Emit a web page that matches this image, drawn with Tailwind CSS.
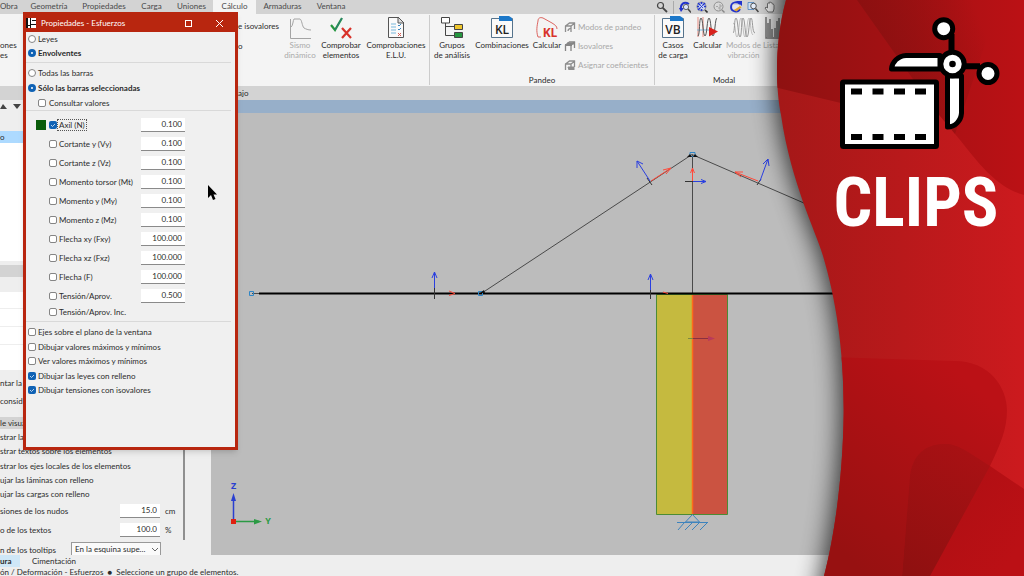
<!DOCTYPE html>
<html lang="es">
<head>
  <meta charset="utf-8">
  <meta name="viewport" content="width=device-width, initial-scale=1">
  <title>Propiedades - Esfuerzos</title>
  <script src="https://cdn.jsdelivr.net/npm/@tailwindcss/browser@4"></script>
</head>
<body class="relative flex flex-col h-screen overflow-hidden bg-[#eeeeee] font-[Lato,'Open_Sans',sans-serif] text-[8px] leading-[10px] text-[#2b2b2b]">

  <!-- tabs -->
  <nav class="flex items-center h-[14px] shrink-0 bg-[#d3d3d3] text-[#4a4a4a] whitespace-nowrap">
    <button class="w-[23px] h-[14px] pb-[2px] text-left">Obra</button>
    <button class="w-[52px] h-[14px] pb-[2px]">Geometría</button>
    <button class="w-[58px] h-[14px] pb-[2px]">Propiedades</button>
    <button class="w-[37px] h-[14px] pb-[2px]">Carga</button>
    <button class="w-[43px] h-[14px] pb-[2px]">Uniones</button>
    <button class="w-[43px] h-[14px] pb-[2px] bg-[#f4f4f4]">Cálculo</button>
    <button class="w-[53px] h-[14px] pb-[2px]">Armaduras</button>
    <button class="w-[44px] h-[14px] pb-[2px]">Ventana</button>
    <div class="flex items-center ml-auto mr-[248px] gap-[5px]">
      <button aria-label="Buscar"><svg class="size-3" viewBox="0 0 12 12" fill="none" stroke="#444"><circle cx="4.5" cy="4.5" r="3" stroke-width="1.2"/><path d="M6.8 6.8L11 11" stroke-width="1.8"/></svg></button>
      <span class="w-px h-[13px] bg-[#aaaaaa]"></span>
      <button aria-label="Zoom previo"><svg class="size-3" viewBox="0 0 12 12" fill="none"><path d="M2 9C1 3 5 0 10 3" stroke="#2233cc" stroke-width="2"/><path d="M0 7l5 0-3 4z" fill="#2233cc"/><circle cx="7" cy="6" r="2.6" fill="#dde6ff" stroke="#444" stroke-width=".8"/><path d="M9 8l3 3.500" stroke="#444" stroke-width="1.500"/></svg></button>
      <button aria-label="Zoom total"><svg class="size-3" viewBox="0 0 12 12" fill="none"><circle cx="5.500" cy="5.500" r="4.500" fill="#c9d4ee" stroke="#777" stroke-width=".8"/><path d="M2 2l2 2M9 2L7 4M2 9l2-2M5.500 1v2M5.500 8v2M1 5.500h2M8 5.500h2" stroke="#2233cc" stroke-width="1.600"/><path d="M4 4l3 3M7 4L4 7" stroke="#2233cc" stroke-width=".8"/><path d="M9 9l2.500 2.500" stroke="#333" stroke-width="1.600"/></svg></button>
      <button aria-label="Zoom doble"><svg class="size-3" viewBox="0 0 12 12" fill="none"><circle cx="5.500" cy="5.500" r="4.500" fill="#d8d8d8" stroke="#888" stroke-width=".9"/><path d="M3 5.500h2M6 4h2v2H6v2h2.500" stroke="#999" stroke-width=".8"/><path d="M9 9l2.500 2.500" stroke="#888" stroke-width="1.400"/></svg></button>
      <button aria-label="Redibujar"><svg class="size-3" viewBox="0 0 12 12" fill="none"><path d="M3 4h6v4H3z" fill="#e4e4f2"/><path d="M10 3C7 0 1 1 1 6c0 5 7 6 9 2" stroke="#2233cc" stroke-width="1.800"/><path d="M6 0h6v5z" fill="#2233cc"/><path d="M4 9l6-4 1.500 1.500-5 4z" fill="#e5a52c"/></svg></button>
      <button aria-label="Zoom ventana"><svg class="size-3" viewBox="0 0 12 12" fill="none"><path d="M1 1.500h6v7H1z" fill="#cfe0f2" stroke="#4a80bb" stroke-width=".8"/><circle cx="6.500" cy="5" r="2.800" fill="#e6eefa" stroke="#444" stroke-width=".9"/><path d="M8.500 7.500l3 3.500" stroke="#444" stroke-width="1.500"/></svg></button>
      <button aria-label="Mover"><svg class="size-3" viewBox="0 0 12 12" fill="#f5f5f5" stroke="#555" stroke-width=".8"><path d="M4 11L1 7l1-1 1.500 1V2.500l1-.5.700.600V1.300l1-.3.700.5.2.5 1-.2.600.7v.7l.9.2.4.8V8L9 11z"/></svg></button>
    </div>
  </nav>

  <!-- ribbon -->
  <section class="flex shrink-0 h-[72px] bg-[#f4f4f4] text-center leading-[10px] whitespace-nowrap overflow-hidden">
    <div class="w-[238px] shrink-0 pt-[26px] text-left">ones<br>es</div>
    <div class="w-[45px] shrink-0 pt-[7px] text-left"><p>e isovalores</p><p class="mt-[10px]">o</p></div>
    <div class="flex w-[147px] shrink-0 border-r border-[#cccccc] my-px">
      <button class="flex flex-col items-center w-[34px] text-[#aaaaaa]">
        <svg class="w-6 h-[25px]" viewBox="0 0 24 25" fill="none" stroke="#a4a4a4"><path d="M2.500 4v19.500H23"/><path d="M3 12c2-1 2-7 3-8h6c2 1 2 7 4 9 2 1 4 2 7 2"/></svg>
        Sismo<br>dinámico
      </button>
      <button class="flex flex-col items-center w-[48px]">
        <svg class="w-6 h-[25px]" viewBox="0 0 24 25" fill="none"><path d="M2 10l4 5L13 3" stroke="#25963f" stroke-width="2.200"/><path d="M6 15L13 3" stroke="#2d7090" stroke-width=".8"/><path d="M13 13l9 10M22 13l-9 10" stroke="#d8322a" stroke-width="2.200"/></svg>
        Comprobar<br>elementos
      </button>
      <button class="flex flex-col items-center w-[62px]">
        <svg class="w-6 h-[25px]" viewBox="0 0 24 25" fill="none"><path d="M4.500 2.500h10l5 5v15h-15z" fill="#fafafa" stroke="#555"/><path d="M14 2v6h6z" fill="#ddd" stroke="#555"/><path d="M7 9h5M7 12h5M7 15h5M7 18h5" stroke="#79b8dc"/><path d="M14 10l1 1 2-2M14 14l1 1 2-2" stroke="#3b88c0"/><path d="M14 18l3 3M17 18l-3 3" stroke="#d85a50"/></svg>
        Comprobaciones<br>E.L.U.
      </button>
    </div>
    <div class="flex flex-col w-[225px] shrink-0 border-r border-[#cccccc] my-px">
      <div class="flex h-[62px]">
        <button class="flex flex-col items-center w-[44px]">
          <svg class="w-6 h-[25px]" viewBox="0 0 24 25" fill="none" stroke="#444"><path d="M5.500 7v13.500H14M5.500 11.500H14"/><path d="M1.500 2.500h8V8h-8z" fill="#fff"/><path d="M14.500 9.500h8v5h-8z" fill="#eec52c"/><path d="M14.500 17.500h8v5h-8z" fill="#25963f"/></svg>
          Grupos<br>de análisis
        </button>
        <button class="flex flex-col items-center w-[56px]">
          <svg class="w-6 h-[25px]" viewBox="0 0 24 25"><path d="M1.500 3.500h21v19h-21z" fill="#fafafa" stroke="#55738c"/><path d="M9 1h10l3 2v3H9z" fill="#1c78c9"/><text x="12" y="19" text-anchor="middle" font-size="12" font-weight="600" fill="#222" font-family="Open Sans">KL</text></svg>
          Combinaciones
        </button>
        <button class="flex flex-col items-center w-[34px]">
          <svg class="w-6 h-[25px]" viewBox="0 0 24 25"><path d="M6 22H3c-2-6-1-11 0-16 0-3 2-4 5-3l9 5c3 2 5 3 5 6" fill="none" stroke="#dc6560"/><text x="15" y="22" text-anchor="middle" font-size="12" font-weight="700" fill="#d8322a" font-family="Open Sans">KL</text></svg>
          Calcular
        </button>
        <div class="flex flex-col pt-[7px] gap-[9px] text-[#a8a8a8]">
          <button class="flex items-center gap-[2px]"><svg class="w-3 h-[10px]" viewBox="0 0 12 10" fill="none" stroke="#8d8d8d"><path d="M1.500 10V4l4-3h5v6M1 4h6v6M7 4l4-3M4 9c0-4 4-1 3-5" stroke-width="1.300"/></svg>Modos de pandeo</button>
          <button class="flex items-center gap-[2px]"><svg class="w-3 h-[10px]" viewBox="0 0 12 10" fill="none" stroke="#858585"><path d="M1.500 10V4l4-3h5v6M7 10V4l4-3" stroke-width="1.300"/><path d="M1 4h7M3 2.500h7" stroke-width="2"/></svg>Isovalores</button>
          <button class="flex items-center gap-[2px]"><svg class="w-3 h-[10px]" viewBox="0 0 12 10" fill="none" stroke="#8d8d8d"><path d="M1.500 10V4l4-3h5v6M1 4h6v6M7 4l4-3" stroke-width="1.300"/><path d="M4 7h6v3H5z" fill="#8d8d8d"/></svg>Asignar coeficientes</button>
        </div>
      </div>
      <p class="leading-[10px]">Pandeo</p>
    </div>
    <div class="flex flex-col w-[138px] shrink-0 my-px">
      <div class="flex h-[62px]">
        <button class="flex flex-col items-center w-[36px]">
          <svg class="w-6 h-[25px]" viewBox="0 0 24 25"><path d="M1.500 3.500h21v19h-21z" fill="#fafafa" stroke="#55738c"/><path d="M9 1h10l3 2v3H9z" fill="#1c78c9"/><text x="12" y="19" text-anchor="middle" font-size="12" font-weight="600" fill="#222" font-family="Open Sans">VB</text></svg>
          Casos<br>de carga
        </button>
        <button class="flex flex-col items-center w-[33px]">
          <svg class="w-6 h-[25px]" viewBox="0 0 24 25" fill="none"><path d="M2 2v20M7 2v20" stroke="#e58b80"/><path d="M1 15h12" stroke="#79b8dc"/><path d="M2 21C4 20 3 3 5 3s2 18 4 18 2-18 4-18 2 18 4 18 2-18 4-18" stroke="#555"/><path d="M13 12l9 4.500-9 5z" fill="#d8221d"/></svg>
          Calcular
        </button>
        <button class="flex flex-col items-center w-[39px] text-[#aaaaaa]">
          <svg class="w-6 h-[25px]" viewBox="0 0 24 25" fill="none" stroke="#9a9a9a"><path d="M1 18C3 18 2 3 4 3s2 19 4 19S9 3 11 3s2 19 4 19 2-19 4-19 1 15 4 15"/><path d="M1 8c3 0 2 14 4 14S7 3 9 3s2 19 4 19 2-19 4-19 1 15 4 17" stroke-width=".6"/></svg>
          Modos de<br>vibración
        </button>
        <button class="flex flex-col items-start text-[#aaaaaa]">
          <svg class="w-6 h-[25px]" viewBox="0 0 24 25" fill="none" stroke="#777"><path d="M3 2v21h21" stroke-width="1.500"/><path d="M5 22V8M7 22V4M9 22v-8M12 22v-9M14 22V6M16 22V3M19 22V9" stroke-width="1.500"/></svg>
          Listados
        </button>
      </div>
      <p class="leading-[10px]">Modal</p>
    </div>
  </section>

  <div class="flex items-center shrink-0 h-[14px] bg-[#d3d3d3] pl-[238px]">ajo</div>

  <main class="flex flex-1 min-h-0">
    <!-- side panel -->
    <aside class="flex flex-col w-[211px] shrink-0 overflow-hidden whitespace-nowrap">
      <div class="flex h-[31px] shrink-0 gap-[5px] pt-1">
        <svg class="w-2 h-[6px]" viewBox="0 0 8 6"><path d="M0 5h7L3 0z" fill="#444"/></svg>
        <svg class="w-2 h-[6px]" viewBox="0 0 8 6"><path d="M0 0h8L4 5z" fill="#444"/></svg>
      </div>
      <div class="h-[12px] shrink-0 bg-[#addaff] leading-[12px]">o</div>
      <div class="h-[118px] shrink-0 bg-white"></div>
      <div class="h-[4px] shrink-0"></div>
      <div class="h-[12px] shrink-0 bg-[#d3d3d3]"></div>
      <div class="h-[15px] shrink-0"></div>
      <div class="shrink-0 bg-white divide-y divide-[#eeeeee]">
        <div class="h-[17px]"></div><div class="h-[18px]"></div><div class="h-[18px]"></div><div class="h-[25px]"></div>
      </div>
      <p class="mt-[8px] shrink-0">ntar la</p>
      <p class="mt-[8px] shrink-0">consid</p>
      <p class="mt-[11px] h-[12px] shrink-0 bg-[#d3d3d3] leading-[12px]">le visua</p>
      <div class="relative flex-1 min-h-0 leading-[14px] pt-px">
        <p>strar la</p>
        <p>strar textos sobre los elementos</p>
        <p class="mt-px">strar los ejes locales de los elementos</p>
        <p>ujar las láminas con relleno</p>
        <p>ujar las cargas con relleno</p>
        <div class="flex items-center h-[19px]">
          <label for="nudos" class="w-[120px]">siones de los nudos</label>
          <input id="nudos" value="15.0" class="w-10 h-[14px] px-[3px] bg-white border-b border-[#8a8a8a] text-right"><span class="ml-[5px]">cm</span>
        </div>
        <div class="flex items-center h-[19px]">
          <label for="textos" class="w-[120px]">o de los textos</label>
          <input id="textos" value="100.0" class="w-10 h-[14px] px-[3px] bg-white border-b border-[#8a8a8a] text-right"><span class="ml-[5px]">%</span>
        </div>
        <div class="flex items-center h-[19px] mt-px">
          <label for="tooltips" class="w-[71px]">n de los tooltips</label>
          <div class="relative">
            <select id="tooltips" class="appearance-none w-[90px] h-4 px-[3px] bg-[#fafafa] border border-[#999999] leading-[13px]"><option>En la esquina supe...</option></select>
            <svg class="absolute right-[3px] top-[6px] w-[6px] h-1" viewBox="0 0 6 4" fill="none" stroke="#666"><path d="M0 0l3 3 3-3"/></svg>
          </div>
        </div>
        <div class="absolute left-[183px] top-0 w-[2px] h-[111px] bg-[#8f8f8f]"></div>
      </div>
    </aside>

    <!-- drawing -->
    <div class="flex flex-col flex-1 min-w-0">
      <div class="h-[13px] shrink-0 bg-[#97afc9]"></div>
      <svg class="flex-1 min-h-0 w-full bg-[#bcbcbc]" viewBox="211 113 813 442" preserveAspectRatio="xMinYMin slice" fill="none">
        <g stroke="#4a4a4a"><path d="M482 293L692 154.500 850 223M692.500 155v138M252 293.500h9"/></g>
        <path d="M656.500 294.500h36v220h-36z" fill="#c5ba3f"/>
        <path d="M692.500 294.500h35v220h-35z" fill="#cb5341"/>
        <path d="M656.500 294.500h71v220h-71z" stroke="#4c8b35"/>
        <path d="M692.500 295v219" stroke="#ff6a1a" stroke-width="1.500"/>
        <path d="M259 293.500h600" stroke="#000" stroke-width="2"/>
        <path d="M434.500 284v15M650.500 284v15M685 181.500h8M647 178l5 7M757 185l4-6" stroke="#333"/>
        <g stroke="#2a3fe0">
          <path d="M434.500 288v-16m-2.500 6l2.500-6 2.500 6M650.500 290v-16m-2.500 6l2.500-6 2.500 6"/>
          <path d="M650 181l-13-20m0 7l0-7 6 3M760 181l8-22m-5 5l5-5 1 7M693 181.500h13m-5-2l5 2-5 2"/>
        </g>
        <g stroke="#ff4a3a">
          <path d="M651 181l20-13m-8 2l8-2-5 6M758 181l-23-9m8 0l-8 0 6 5M692.500 181v-13m-2 5l2-5 2 5M449 291l6 2.500-6 2M663 292l5 1.500"/>
        </g>
        <path d="M688 338.500h5" stroke="#7d8840"/><path d="M693 338.500h18" stroke="#8a3040"/><path d="M708 336l7 2.500-7 2.500z" fill="#b93a5b"/>
        <path d="M249.500 291.500h4v4h-4zM478.500 291.500h4v4h-4zM690 152.500h5v4h-5z" stroke="#2f86c7"/>
        <path d="M480 293l4-3 1 3zM687 157l3-3 2 3zM693 157l2-3 3 3z" fill="#111"/>
        <path d="M692.500 514.500l-7 7.500h14zM677 522.500h31M684 523l-6 7M692 523l-7 7M699 523l-7 7M707 523l-7 7" stroke="#3d83bd"/>
        <!-- axes -->
        <path d="M233.500 520v-22" stroke="#2a3fd0" stroke-width="1.500"/><path d="M231 501l2.500-8 2.500 8z" fill="#2a3fd0"/>
        <path d="M235 521.500h24" stroke="#2b9a44" stroke-width="1.500"/><path d="M254 519l8 2.500-8 3z" fill="#2b9a44"/>
        <path d="M231 519h5v5h-5z" fill="#e02010"/>
        <text x="233.500" y="489" text-anchor="middle" font-size="9" font-weight="700" fill="#2a3fd0" font-family="Open Sans">Z</text>
        <text x="268" y="524" text-anchor="middle" font-size="9" font-weight="700" fill="#2b9a44" font-family="Open Sans">Y</text>
      </svg>
    </div>
  </main>

  <footer class="shrink-0 h-[21px] whitespace-nowrap">
    <div class="flex h-3 leading-[12px]">
      <button class="w-5 bg-[#cfe7f7] text-left font-bold">ura</button>
      <button class="ml-3">Cimentación</button>
    </div>
    <p class="leading-[10px]">ón / Deformación - Esfuerzos &nbsp;● &nbsp;Seleccione un grupo de elementos.</p>
  </footer>

  <!-- properties window -->
  <form class="absolute left-[23px] top-[12px] w-[215px] h-[438px] flex flex-col border-[3px] border-t-0 border-[#b8260f] bg-[#f0f0f0] shadow-md whitespace-nowrap">
    <header class="flex items-center h-[20px] shrink-0 bg-[#b8260f] text-white pt-[2px]">
      <svg class="w-[10px] h-[10px]" viewBox="0 0 10 10"><path d="M0 0h10v10H0z" fill="#fff"/><path d="M0 0h2v10H0zM4 0h1v10H4zM5 6h5v1H5z" fill="#111"/><path d="M6 2h4v1H6zM0 7h4v1H0z" fill="#111"/></svg>
      <h1 class="ml-[5px]">Propiedades - Esfuerzos</h1>
      <button type="button" aria-label="Maximizar" class="ml-auto size-[7px] border border-white"></button>
      <button type="button" aria-label="Cerrar" class="ml-6 mr-3"><svg class="size-[7px]" viewBox="0 0 7 7" stroke="#fff"><path d="M0 0l7 7M7 0L0 7"/></svg></button>
    </header>

    <div class="flex flex-col pl-[2px] pb-[2px] mr-1 border-b border-[#d9d9d9]">
      <label class="flex items-center gap-[2px] h-[14px]"><input type="radio" name="tipo" class="appearance-none size-2 rounded-full border border-[#858585] bg-white checked:border-[3px] checked:border-[#0f62b5]">Leyes</label>
      <label class="flex items-center gap-[2px] h-[14px] font-bold"><input type="radio" name="tipo" checked class="appearance-none size-2 rounded-full border border-[#858585] bg-white checked:border-[3px] checked:border-[#0f62b5]">Envolventes</label>
    </div>

    <div class="flex flex-col gap-px pl-[2px] pt-[3px] mr-1 border-b border-[#d9d9d9]">
      <label class="flex items-center gap-[2px] h-[14px]"><input type="radio" name="barras" class="appearance-none size-2 rounded-full border border-[#858585] bg-white checked:border-[3px] checked:border-[#0f62b5]">Todas las barras</label>
      <label class="flex items-center gap-[2px] h-[14px] font-bold"><input type="radio" name="barras" checked class="appearance-none size-2 rounded-full border border-[#858585] bg-white checked:border-[3px] checked:border-[#0f62b5]">Sólo las barras seleccionadas</label>
      <label class="flex items-center gap-[3px] h-[14px] pl-[10px]"><input type="checkbox" class="appearance-none size-2 rounded-[2px] border border-[#858585] bg-white">Consultar valores</label>
    </div>

    <div class="flex flex-col pt-[4px] pb-[2px] mr-1 border-b border-[#d9d9d9]">
      <div class="flex items-center h-[19px] pl-[10px]">
        <span class="size-[10px] mr-[3px] bg-[#0a5c0a]"></span>
        <span class="grid mr-px">
          <input id="n" type="checkbox" checked class="appearance-none [grid-area:1/1] size-2 rounded-[2px] bg-[#0f62b5]">
          <svg class="[grid-area:1/1] size-2 pointer-events-none" viewBox="0 0 8 8" fill="none" stroke="#fff" stroke-width=".7"><path d="M2 4l1.500 1.500L6 3"/></svg>
        </span>
        <label for="n" class="w-[83px]"><span class="outline-1 outline-dotted outline-[#555555] px-px">Axil (N)</span></label>
        <input aria-label="Axil (N)" value="0.100" class="w-[44px] h-[14px] px-[3px] bg-white border-b border-[#8a8a8a] text-right">
      </div>
      <div class="flex items-center h-[19px] pl-[23px]">
        <input id="vy" type="checkbox" class="appearance-none size-2 mr-[2px] rounded-[2px] border border-[#858585] bg-white">
        <label for="vy" class="w-[82px]">Cortante y (Vy)</label>
        <input aria-label="Cortante y (Vy)" value="0.100" class="w-[44px] h-[14px] px-[3px] bg-white border-b border-[#8a8a8a] text-right">
      </div>
      <div class="flex items-center h-[19px] pl-[23px]">
        <input id="vz" type="checkbox" class="appearance-none size-2 mr-[2px] rounded-[2px] border border-[#858585] bg-white">
        <label for="vz" class="w-[82px]">Cortante z (Vz)</label>
        <input aria-label="Cortante z (Vz)" value="0.100" class="w-[44px] h-[14px] px-[3px] bg-white border-b border-[#8a8a8a] text-right">
      </div>
      <div class="flex items-center h-[19px] pl-[23px]">
        <input id="mt" type="checkbox" class="appearance-none size-2 mr-[2px] rounded-[2px] border border-[#858585] bg-white">
        <label for="mt" class="w-[82px]">Momento torsor (Mt)</label>
        <input aria-label="Momento torsor (Mt)" value="0.100" class="w-[44px] h-[14px] px-[3px] bg-white border-b border-[#8a8a8a] text-right">
      </div>
      <div class="flex items-center h-[19px] pl-[23px]">
        <input id="my" type="checkbox" class="appearance-none size-2 mr-[2px] rounded-[2px] border border-[#858585] bg-white">
        <label for="my" class="w-[82px]">Momento y (My)</label>
        <input aria-label="Momento y (My)" value="0.100" class="w-[44px] h-[14px] px-[3px] bg-white border-b border-[#8a8a8a] text-right">
      </div>
      <div class="flex items-center h-[19px] pl-[23px]">
        <input id="mz" type="checkbox" class="appearance-none size-2 mr-[2px] rounded-[2px] border border-[#858585] bg-white">
        <label for="mz" class="w-[82px]">Momento z (Mz)</label>
        <input aria-label="Momento z (Mz)" value="0.100" class="w-[44px] h-[14px] px-[3px] bg-white border-b border-[#8a8a8a] text-right">
      </div>
      <div class="flex items-center h-[19px] pl-[23px]">
        <input id="fxy" type="checkbox" class="appearance-none size-2 mr-[2px] rounded-[2px] border border-[#858585] bg-white">
        <label for="fxy" class="w-[82px]">Flecha xy (Fxy)</label>
        <input aria-label="Flecha xy (Fxy)" value="100.000" class="w-[44px] h-[14px] px-[3px] bg-white border-b border-[#8a8a8a] text-right">
      </div>
      <div class="flex items-center h-[19px] pl-[23px]">
        <input id="fxz" type="checkbox" class="appearance-none size-2 mr-[2px] rounded-[2px] border border-[#858585] bg-white">
        <label for="fxz" class="w-[82px]">Flecha xz (Fxz)</label>
        <input aria-label="Flecha xz (Fxz)" value="100.000" class="w-[44px] h-[14px] px-[3px] bg-white border-b border-[#8a8a8a] text-right">
      </div>
      <div class="flex items-center h-[19px] pl-[23px]">
        <input id="f" type="checkbox" class="appearance-none size-2 mr-[2px] rounded-[2px] border border-[#858585] bg-white">
        <label for="f" class="w-[82px]">Flecha (F)</label>
        <input aria-label="Flecha (F)" value="100.000" class="w-[44px] h-[14px] px-[3px] bg-white border-b border-[#8a8a8a] text-right">
      </div>
      <div class="flex items-center h-[19px] pl-[23px]">
        <input id="ta" type="checkbox" class="appearance-none size-2 mr-[2px] rounded-[2px] border border-[#858585] bg-white">
        <label for="ta" class="w-[82px]">Tensión/Aprov.</label>
        <input aria-label="Tensión/Aprov." value="0.500" class="w-[44px] h-[14px] px-[3px] bg-white border-b border-[#8a8a8a] text-right">
      </div>
      <label class="flex items-center gap-[2px] h-[14px] pl-[23px]"><input type="checkbox" class="appearance-none size-2 rounded-[2px] border border-[#858585] bg-white">Tensión/Aprov. Inc.</label>
    </div>

    <div class="flex flex-col pl-[2px] pt-[3px]">
      <label class="flex items-center gap-[2px] h-[14px]"><input type="checkbox" class="appearance-none size-2 rounded-[2px] border border-[#858585] bg-white">Ejes sobre el plano de la ventana</label>
      <label class="flex items-center gap-[2px] h-[15px]"><input type="checkbox" class="appearance-none size-2 rounded-[2px] border border-[#858585] bg-white">Dibujar valores máximos y mínimos</label>
      <label class="flex items-center gap-[2px] h-[14px]"><input type="checkbox" class="appearance-none size-2 rounded-[2px] border border-[#858585] bg-white">Ver valores máximos y mínimos</label>
      <label class="flex items-center gap-[2px] h-[15px]">
        <span class="grid"><input type="checkbox" checked class="appearance-none [grid-area:1/1] size-2 rounded-[2px] bg-[#0f62b5]"><svg class="[grid-area:1/1] size-2 pointer-events-none" viewBox="0 0 8 8" fill="none" stroke="#fff" stroke-width=".7"><path d="M2 4l1.500 1.500L6 3"/></svg></span>
        Dibujar las leyes con relleno
      </label>
      <label class="flex items-center gap-[2px] h-[14px]">
        <span class="grid"><input type="checkbox" checked class="appearance-none [grid-area:1/1] size-2 rounded-[2px] bg-[#0f62b5]"><svg class="[grid-area:1/1] size-2 pointer-events-none" viewBox="0 0 8 8" fill="none" stroke="#fff" stroke-width=".7"><path d="M2 4l1.500 1.500L6 3"/></svg></span>
        Dibujar tensiones con isovalores
      </label>
    </div>
  </form>

  <!-- mouse pointer -->
  <svg class="absolute left-[208px] top-[185px] w-[10px] h-[15px] pointer-events-none" viewBox="0 0 10 15"><path d="M0 0v13l3-3 2 5 2.500-1-2-4.500H9z" fill="#000"/></svg>

  <!-- clips banner -->
  <svg class="absolute right-0 top-0 h-full" viewBox="724 0 300 576" fill="none">
    <defs>
      <linearGradient id="base" x1="780" x2="1024" y1="0" y2="0" gradientUnits="userSpaceOnUse"><stop stop-color="#a51818"/><stop offset="1" stop-color="#cc1a1e"/></linearGradient>
      <linearGradient id="top" x1="780" x2="1024" y1="0" y2="0" gradientUnits="userSpaceOnUse"><stop stop-color="#8f1111"/><stop offset=".4" stop-color="#a01113"/><stop offset="1" stop-color="#bb1115"/></linearGradient>
      <linearGradient id="wedge" x1="870" x2="980" y1="60" y2="20" gradientUnits="userSpaceOnUse"><stop stop-color="#8b1010"/><stop offset="1" stop-color="#8b1010" stop-opacity="0"/></linearGradient>
      <linearGradient id="low" x1="850" x2="990" y1="560" y2="400" gradientUnits="userSpaceOnUse"><stop stop-color="#971111"/><stop offset="1" stop-color="#bb1116"/></linearGradient>
      <linearGradient id="side" x1="930" x2="1024" y1="480" y2="540" gradientUnits="userSpaceOnUse"><stop stop-color="#ae0f13"/><stop offset="1" stop-color="#bb1015"/></linearGradient>
      <linearGradient id="overlap" x1="900" x2="980" y1="570" y2="450" gradientUnits="userSpaceOnUse"><stop stop-color="#8f1010"/><stop offset="1" stop-color="#a91114"/></linearGradient>
      <filter id="soft" x="-30%" width="160%" y="-10%" height="120%"><feGaussianBlur stdDeviation="12"/></filter>
      <path id="wave" d="M786 0C775 40 775 85 781 115C786 150 795 178 803 202C812 227 818 240 823 256C836 300 844 350 843.700 413C843 470 836 530 824 576H1024V0Z"/>
      <clipPath id="cut"><use href="#wave"/></clipPath>
    </defs>
    <path d="M783 -40C773 40 773 85 778 115C783 150 792 178 800 202C809 227 815 240 820 256C833 300 841 350 840.700 413C840 470 833 530 812 620H1060V-40Z" fill="#000" opacity=".75" filter="url(#soft)"/>
    <use href="#wave" fill="url(#base)"/>
    <g clip-path="url(#cut)">
      <path d="M770 86L845 104 935 110 960 140C985 172 1000 188 1024 195V0H770Z" fill="url(#top)"/>
      <path d="M857 0L915 82 935 110 955 134 1000 0Z" fill="url(#wedge)"/>
      <path d="M830 357L955 361C990 361 1007 388 1007 410C1007 430 1000 445 990 466L930 576H820Z" fill="url(#low)"/>
      <path d="M902 576L910 475C914 450 930 444 945 444C958 444 968 452 990 466L1024 489V576Z" fill="url(#side)"/>
      <path d="M902 576L910 475C914 450 930 444 945 444C958 444 968 452 990 466L930 576Z" fill="url(#overlap)"/>
    </g>
    <!-- film -->
    <rect x="842.500" y="82" width="94" height="64.500" rx="1" fill="#fff" stroke="#000" stroke-width="5"/>
    <path d="M851 88.500h11v6h-11zM872.500 88.500h11v6h-11zM894 88.500h11v6h-11zM915 88.500h11v6h-11zM851 134h11v6h-11zM872.500 134h11v6h-11zM894 134h11v6h-11zM915 134h11v6h-11z" fill="#000"/>
    <!-- scissors -->
    <g stroke="#000" stroke-width="5" stroke-linejoin="round">
      <path d="M940 55.500H906C898 56 892 62 891.500 69H940Z" fill="#fff"/>
      <path d="M947.500 76V127C955 127 961 121 961.500 113V76Z" fill="#fff"/>
      <path d="M951.500 34V54M964 66.300H980" stroke-width="6"/>
      <circle cx="943.700" cy="28.700" r="9" fill="#fff"/>
      <circle cx="988" cy="73.500" r="9" fill="#fff"/>
      <circle cx="952.500" cy="64" r="11.700" fill="#fff"/>
    </g>
    <circle cx="952.500" cy="64" r="3.300" fill="#000"/>
    <text x="916" y="226" text-anchor="middle" font-size="68" font-weight="700" fill="#fff" font-family="'Roboto Condensed', Roboto, sans-serif">CLIPS</text>
  </svg>
</body>
</html>
